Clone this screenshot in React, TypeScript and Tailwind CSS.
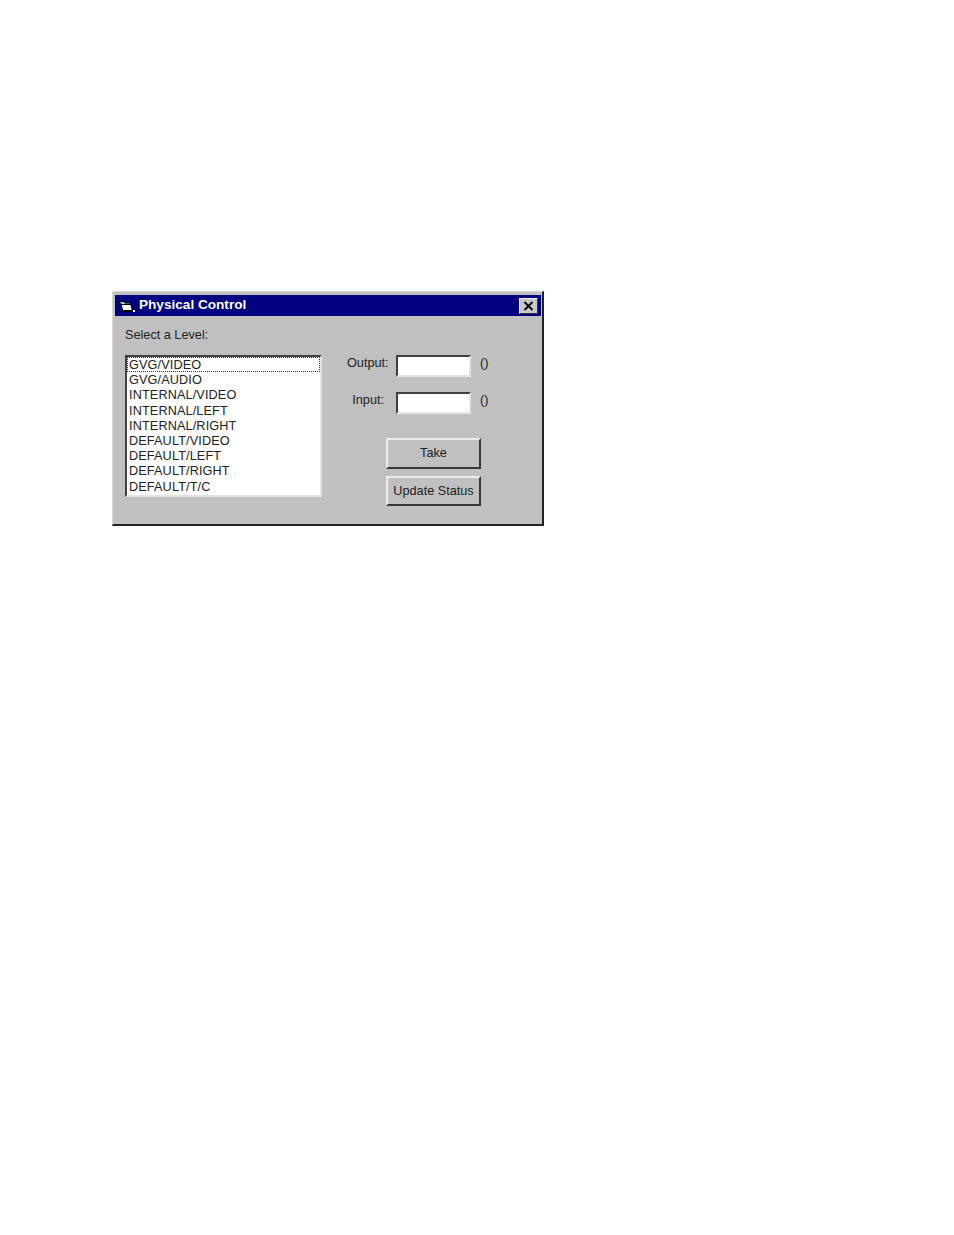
const levels = [
  'GVG/VIDEO',
  'GVG/AUDIO',
  'INTERNAL/VIDEO',
  'INTERNAL/LEFT',
  'INTERNAL/RIGHT',
  'DEFAULT/VIDEO',
  'DEFAULT/LEFT',
  'DEFAULT/RIGHT',
  'DEFAULT/T/C',
];

const FolderIcon = () => (
  <svg width="16" height="14" viewBox="0 0 16 14" className="shrink-0">
    <path d="M0.5 2.5h5l1 1.5h5v2H2.5l-1 0z" fill="#8fc8c8" stroke="#000" strokeWidth="1.2" />
    <path d="M2 5.5h10l1.5 6H3.5z" fill="#fff" stroke="#000" strokeWidth="1.2" />
    <path d="M3.5 11.5h10v1.5h-10z" fill="#000" />
    <rect x="14" y="11" width="2" height="2" fill="#fff" />
  </svg>
);

const Field = ({ label, labelWidth }: { label: string; labelWidth: string }) => (
  <div className="flex items-start h-[22px]">
    <span className={`${labelWidth} text-right leading-[17px]`}>{label}</span>
    <div className="ml-[9px] w-[75px] h-[22px] bg-white border-t-2 border-l-2 border-t-[#404040] border-l-[#404040] border-b-2 border-r-2 border-b-[#e4e4e4] border-r-[#e4e4e4]" />
    <span className="ml-[9px] leading-[17px]">()</span>
  </div>
);

const Button = ({ label, className }: { label: string; className: string }) => (
  <button className={`w-[95px] bg-[#c0c0c0] border-t-2 border-l-2 border-t-[#ececec] border-l-[#ececec] border-b-2 border-r-2 border-b-[#383838] border-r-[#383838] text-[#222] ${className}`}>
    {label}
  </button>
);

export default function App() {
  return (
    <div className="min-h-[1235px] bg-white pt-[291px] pl-[112px] font-['Liberation_Sans',sans-serif] text-[12.7px] text-[#222]">
      <div className="w-[432px] h-[235px] bg-[#c0c0c0] pt-[3px] pl-[2px] pr-[1px] border-t border-l border-t-[#d8d8d8] border-l-[#d8d8d8] border-b-2 border-r-2 border-b-[#222] border-r-[#222]">
        <div className="h-[21px] bg-[#000080] flex items-center pl-[4px] pr-[3px]">
          <FolderIcon />
          <span className="ml-[4px] text-white font-bold text-[13.6px]">Physical Control</span>
          <button className="ml-auto w-[19px] h-[16px] bg-[#c8c8c8] border border-t-[#f0f0f0] border-l-[#f0f0f0] border-b-[#333] border-r-[#333] flex items-center justify-center">
            <svg width="11" height="10" viewBox="0 0 11 10">
              <path d="M1.5 1l8 8M9.5 1l-8 8" stroke="#000" strokeWidth="1.8" />
            </svg>
          </button>
        </div>
        <div className="flex pl-[10px] pt-[10px]">
          <div>
            <div className="h-[17px] leading-[19px]">Select a Level:</div>
            <div className="mt-[12px] w-[197px] h-[142px] bg-white border-t-2 border-l-2 border-t-[#404040] border-l-[#404040] border-b-2 border-r-2 border-b-[#e4e4e4] border-r-[#e4e4e4] overflow-hidden">
              {levels.map((level, i) => (
                <div
                  key={level}
                  className={`h-[15.2px] leading-[16px] pl-[2px] tracking-[0.12px] whitespace-nowrap ${i === 0 ? 'outline-1 -outline-offset-1 outline-dotted outline-[#333]' : ''}`}
                >
                  {level}
                </div>
              ))}
            </div>
          </div>
          <div className="ml-[25px] pt-[29px]">
            <Field label="Output:" labelWidth="w-[39px] mr-[1px]" />
            <div className="mt-[15px]">
              <Field label="Input:" labelWidth="w-[37px] mr-[3px]" />
            </div>
            <div className="ml-[39px] mt-[24px] flex flex-col gap-[7px]">
              <Button label="Take" className="h-[31px]" />
              <Button label="Update Status" className="h-[30px] pt-[2px]" />
            </div>
          </div>
        </div>
      </div>
    </div>
  );
}
